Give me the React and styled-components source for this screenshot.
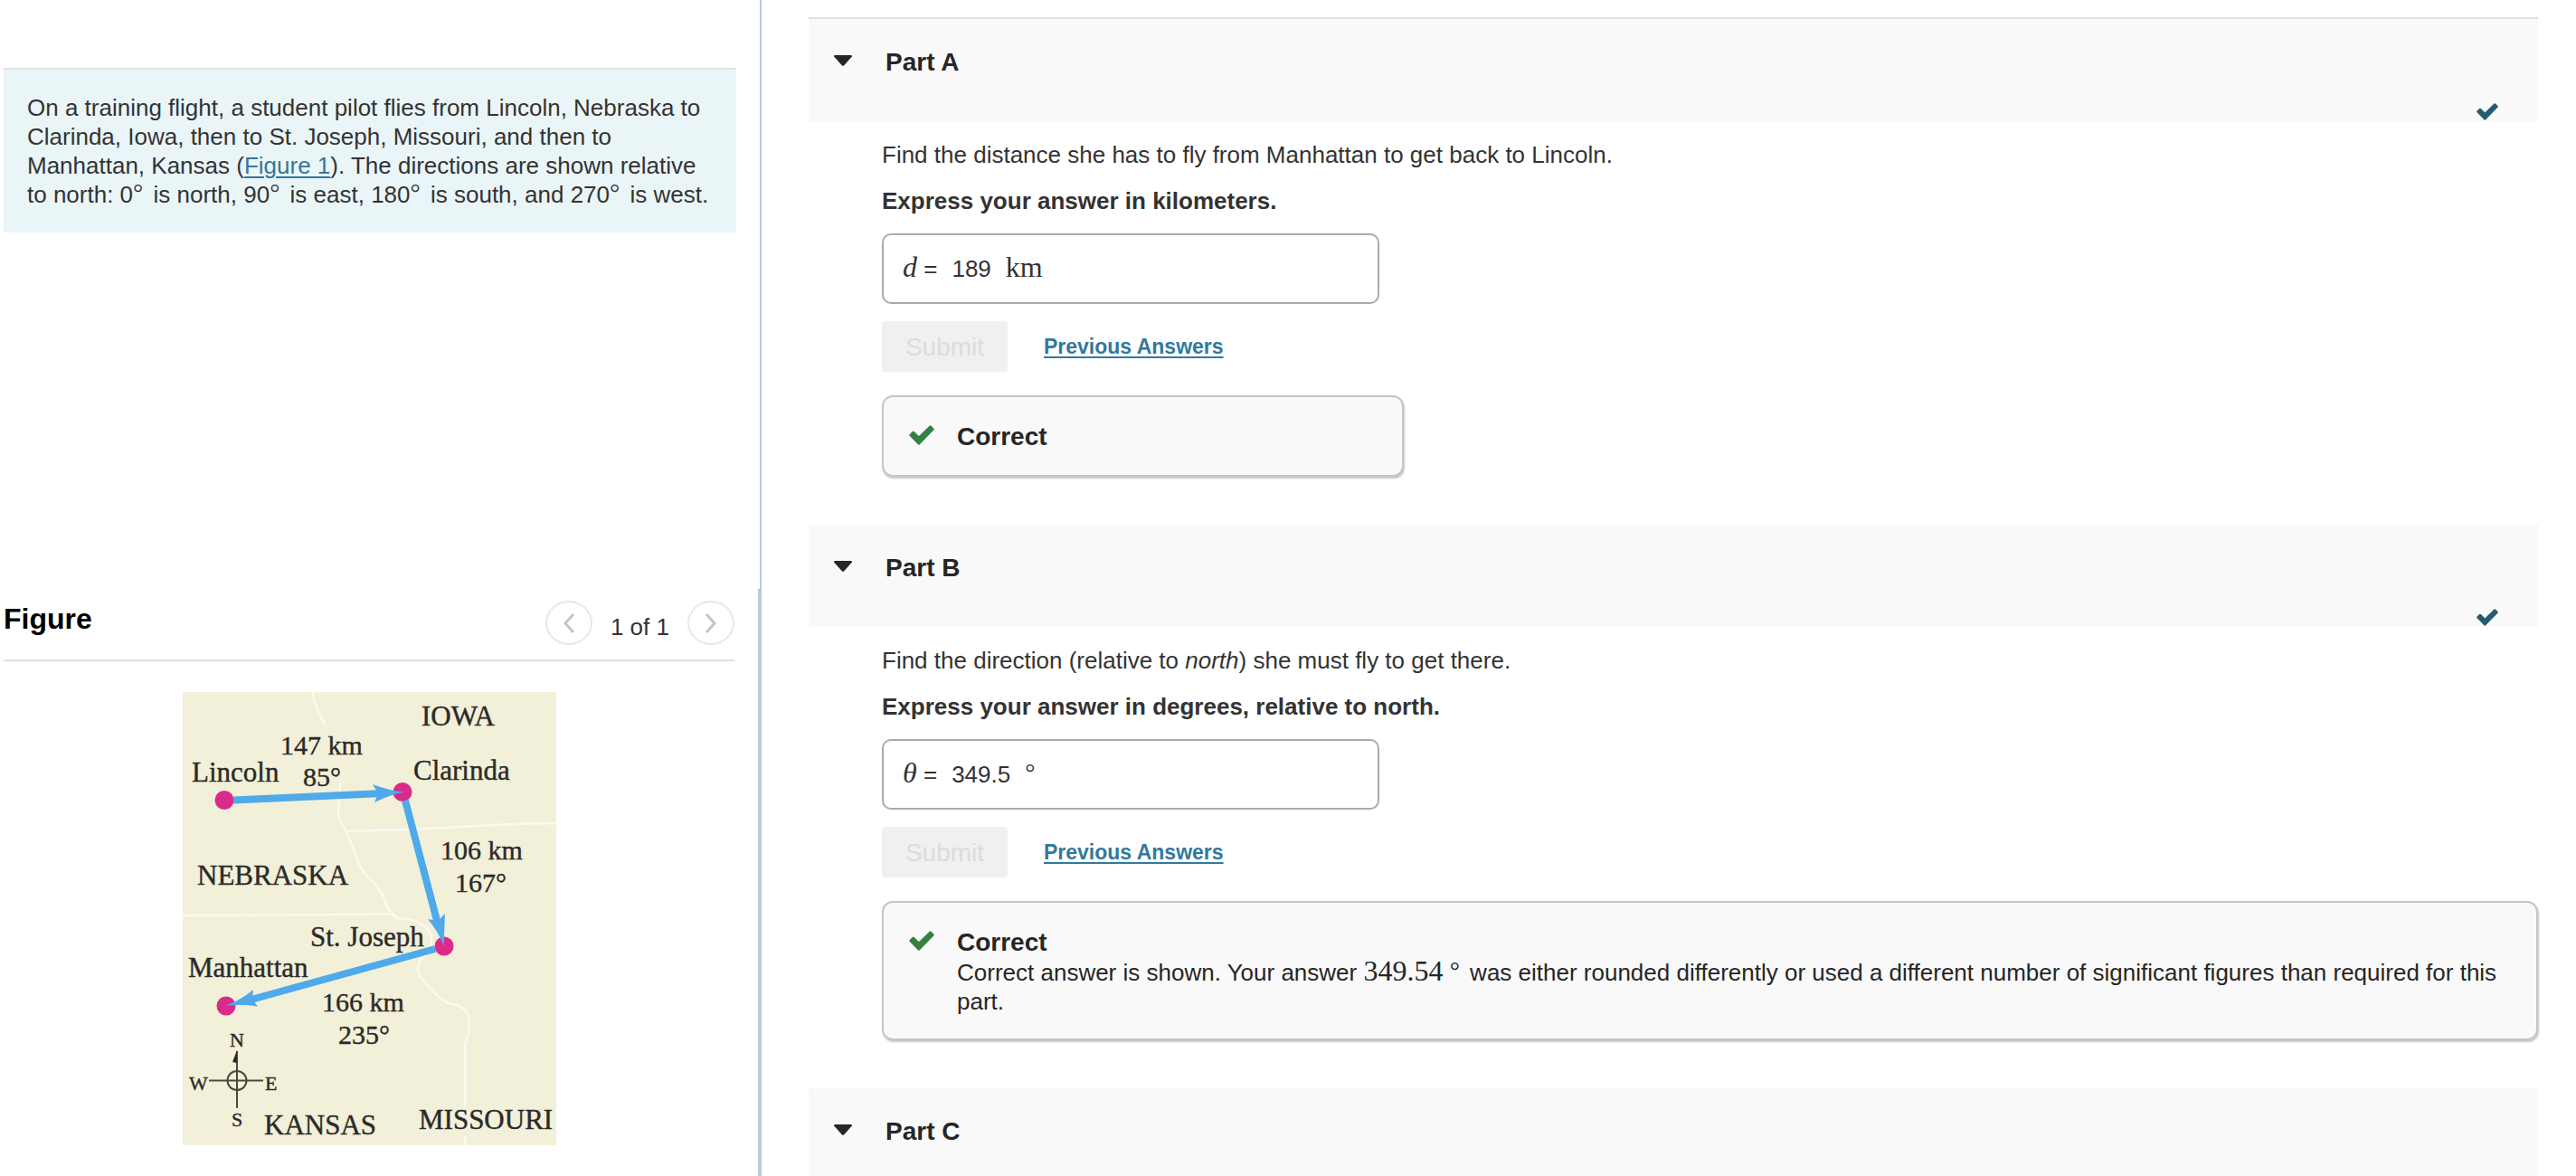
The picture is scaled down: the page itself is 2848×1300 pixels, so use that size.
import React from 'react';
import styled, { createGlobalStyle } from 'styled-components';

const GlobalStyle = createGlobalStyle`
  * {
    box-sizing: border-box;
  }

  body {
    margin: 0;
    background: #ffffff;
    color: #333333;
    font-family: "Liberation Sans", Arial, sans-serif;
    font-size: 26px;
    line-height: 32px;
  }
`;

const Page = styled.div`
  display: flex;
  min-height: 100vh;
`;

const Sidebar = styled.aside`
  display: flex;
  flex-direction: column;
  flex: none;
  width: 842px;
`;

const PromptPane = styled.section`
  min-height: 651px;
  padding: 75px 26px 0 4px;
  border-right: 2px solid #bccadc;
`;

const Prompt = styled.p`
  margin: 0;
  padding: 26px 24px 26px 26px;
  border-top: 2px solid #dfe0e0;
  background: #eaf5f8;
`;

const TextLink = styled.a`
  color: #33789c;
  text-decoration: underline;
  text-decoration-thickness: 2px;
  text-underline-offset: 3px;
`;

const Degree = styled.span`
  margin-right: 4px;
  font-family: "Liberation Serif", serif;
  font-size: 28px;
  line-height: 0;
  vertical-align: 2px;
`;

const FigurePane = styled.section`
  flex: 1;
  padding: 13px 26px 0 4px;
  border-right: 4px solid #bccadc;
`;

const FigureHeader = styled.header`
  display: flex;
  align-items: flex-start;
  justify-content: space-between;
  height: 67px;
  border-bottom: 2px solid #dfe0e0;

  h2 {
    margin: 4px 0 0;
    color: #000000;
    font-size: 32px;
    line-height: 32px;
  }
`;

const Pager = styled.nav`
  display: flex;
  align-items: center;
  gap: 20px;

  span {
    padding-top: 8px;
  }
`;

const PagerButton = styled.button`
  display: grid;
  place-items: center;
  width: 52px;
  height: 49px;
  padding: 0;
  border: 2px solid #e8e8e8;
  border-radius: 50%;
  background: #ffffff;
  color: #c4c4c4;
`;

const MapDrawing = styled.svg`
  display: block;
  width: 413px;
  height: 501px;
  margin: 34px auto 0 198px;
  background: #f2f0d8;

  text {
    fill: #2b2a2a;
    stroke: #2b2a2a;
    stroke-width: 0.4;
    font-family: "Liberation Serif", "Times New Roman", serif;
    font-size: 31px;
  }

  .measure {
    font-size: 30px;
  }

  .compass {
    font-size: 22px;
  }
`;

const Main = styled.main`
  flex: 1;
  min-width: 0;
  padding: 19px 42px 0 52px;
`;

const PartHeader = styled.header`
  display: flex;
  justify-content: space-between;
  align-items: flex-end;
  padding: 0 44px 1px 0;
  border-top: ${({ $ruled }) => ($ruled ? '2px solid #dfe0e0' : 'none')};
  background: #f9f9f9;

  h2 {
    margin: 0;
    font-size: 28px;
  }
`;

const PartToggle = styled.button`
  display: flex;
  align-items: center;
  gap: 37px;
  padding: 32px 28px 48px;
  border: none;
  background: none;
  color: #262626;
  font: inherit;
  font-weight: bold;
  line-height: 32px;
  cursor: pointer;

  svg {
    margin-bottom: 4px;
  }
`;

const PartBody = styled.div`
  padding: 21px 0 53px 81px;
`;

const Question = styled.p`
  margin: 0 0 19px;
`;

const Instruction = styled.p`
  margin: 0 0 20px;
  font-weight: bold;
`;

const AnswerBox = styled.div`
  display: flex;
  align-items: baseline;
  width: 550px;
  height: 78px;
  padding: 21px 21px;
  border: 2px solid #aaaaaa;
  border-radius: 10px;

  label {
    margin-right: 16px;
  }
`;

const MathText = styled.span`
  font-family: "Liberation Serif", "Times New Roman", serif;
  font-size: 32px;
  font-style: ${({ $italic }) => ($italic ? 'italic' : 'normal')};
  line-height: 0;
`;

const AnswerInput = styled.input`
  field-sizing: content;
  margin-right: 16px;
  padding: 0;
  border: none;
  outline: none;
  background: none;
  color: inherit;
  font: inherit;
`;

const Actions = styled.div`
  display: flex;
  align-items: center;
  gap: 40px;
  margin: 19px 0 26px;
`;

const SubmitButton = styled.button`
  width: 139px;
  height: 56px;
  padding: 2px 0 0;
  border: none;
  border-radius: 4px;
  background: #f0f0f0;
  color: #dcdcdc;
  font: inherit;
  font-size: 28px;
`;

const PreviousLink = styled(TextLink)`
  font-size: 23px;
  font-weight: bold;
`;

const Feedback = styled.div`
  display: flex;
  gap: 25px;
  width: ${({ $wide }) => ($wide ? 'auto' : '577px')};
  padding: 28px 28px 25px;
  border: 2px solid #c6c6c6;
  border-radius: 12px;
  background: #f9f9f9;
  box-shadow: 1px 2px 2px #c6c6c6;
  color: #262626;

  svg {
    flex: none;
    margin-top: 3px;
  }

  h3 {
    margin: 0 0 1px;
    font-size: 28px;
  }

  p {
    margin: 0;
  }
`;

function Check({ color, width, height }) {
  return (
    <svg width={width} height={height} viewBox="0 0 24 19" aria-hidden="true">
      <path
        d="M1.500 9.500L4 7L9.300 12.200L20.300 1.500L22.500 3.800L9.300 17.500Z"
        fill={color}
        stroke={color}
        strokeWidth="2.500"
        strokeLinejoin="round"
      />
    </svg>
  );
}

function Chevron({ d }) {
  return (
    <svg width="14" height="24" viewBox="0 0 14 24" fill="none" stroke="currentColor" strokeWidth="3" aria-hidden="true">
      <path d={d} />
    </svg>
  );
}

const places = [
  ['IOWA', 264, 37],
  ['Lincoln', 10, 99],
  ['Clarinda', 255, 97],
  ['NEBRASKA', 16, 213],
  ['St. Joseph', 141, 281],
  ['Manhattan', 6, 315],
  ['KANSAS', 90, 489],
  ['MISSOURI', 261, 483],
];

const measures = [
  ['147 km', 108, 69],
  ['85°', 133, 104],
  ['106 km', 285, 185],
  ['167°', 301, 221],
  ['166 km', 154, 353],
  ['235°', 172, 389],
];

const directions = [
  ['N', 52, 392],
  ['W', 7, 440],
  ['E', 91, 440],
  ['S', 54, 480],
];

const cities = [
  [46, 119.5],
  [243, 110.5],
  [289, 281],
  [48, 347],
];

function FlightMap() {
  return (
    <MapDrawing viewBox="0 0 413 501" role="img" aria-label="Map of the training flight">
      {/* state borders */}
      <g fill="none" stroke="#fafaf0" strokeWidth="2.5">
        <path d="M144 0Q144 12 157 36" />
        <path d="M174 101L172 132Q172 141 181 154L196 192Q200 201 209 209Q220 219 223 230Q227 242 237 250C256 250 275 258 275 275Q275 286 267 292Q257 302 261 311Q267 322 282 336Q290 344 299 345C314 348 320 359 316 377Q312 388 312 396V458" />
        <path d="M312 491V501M181 154L270 151L365 146L413 145M0 247L232 245.5" />
      </g>
      {cities.map(([x, y]) => (
        <circle key={x} cx={x} cy={y} r="10.5" fill="#d92b8a" />
      ))}
      <g stroke="#4eaaea" strokeWidth="8">
        <path d="M56 119.5L222 112M246 120L283 260M279 284L72 341" />
      </g>
      <g fill="#4eaaea">
        <path d="M245 110.5Q228 109 210 102L216 112L212 122Q228 114 245 110.5Z" />
        <path d="M289 281Q289 263 290 245L282 253L271 251Q282 264 289 281Z" />
        <path d="M46 347Q64 341 78 329L77 340L83 347.5Q64 345 46 347Z" />
      </g>
      <g fill="none" stroke="#4a493f" strokeWidth="2">
        <circle cx="60" cy="429.5" r="10.5" />
        <path d="M60 397V460M29 429.5H89" />
      </g>
      <path d="M60 396L55 409L60 410Z" fill="#2b2a2a" />
      {places.map(([name, x, y]) => (
        <text key={name} x={x} y={y}>{name}</text>
      ))}
      {measures.map(([name, x, y]) => (
        <text key={name} className="measure" x={x} y={y}>{name}</text>
      ))}
      {directions.map(([name, x, y]) => (
        <text key={name} className="compass" x={x} y={y}>{name}</text>
      ))}
    </MapDrawing>
  );
}

function Part({ title, ruled, done, children }) {
  const [isOpen, setIsOpen] = React.useState(true);

  return (
    <section>
      <PartHeader $ruled={ruled}>
        <h2>
          <PartToggle aria-expanded={isOpen} onClick={() => setIsOpen((open) => !open)}>
            <svg width="20" height="12" viewBox="0 0 20 12" aria-hidden="true">
              <path d="M1 0H19Q21 1 19 2.500L11 11.500Q10 12 9 11.500L1 2.500Q-1 1 1 0Z" fill="#262626" />
            </svg>
            {title}
          </PartToggle>
        </h2>
        {done && <Check color="#265c70" width={24} height={19} />}
      </PartHeader>
      {isOpen && children && <PartBody>{children}</PartBody>}
    </section>
  );
}

function Answer({ id, symbol, value, unit }) {
  return (
    <>
      <AnswerBox>
        <label htmlFor={id}>
          <MathText $italic>{symbol}</MathText> =
        </label>
        <AnswerInput id={id} defaultValue={value} readOnly />
        {unit}
      </AnswerBox>
      <Actions>
        <SubmitButton disabled>Submit</SubmitButton>
        <PreviousLink href="#previous">Previous Answers</PreviousLink>
      </Actions>
    </>
  );
}

export default function App() {
  return (
    <>
      <GlobalStyle />
      <Page>
        <Sidebar>
          <PromptPane>
            <Prompt>
              On a training flight, a student pilot flies from Lincoln, Nebraska to Clarinda, Iowa,
              then to St. Joseph, Missouri, and then to Manhattan, Kansas (
              <TextLink href="#figure">Figure 1</TextLink>). The directions are shown relative to
              north: 0<Degree>°</Degree> is north, 90<Degree>°</Degree> is east,
              180<Degree>°</Degree> is south, and 270<Degree>°</Degree> is west.
            </Prompt>
          </PromptPane>
          <FigurePane id="figure">
            <FigureHeader>
              <h2>Figure</h2>
              <Pager aria-label="Figures">
                <PagerButton disabled aria-label="Previous figure">
                  <Chevron d="M12 2L3 12L12 22" />
                </PagerButton>
                <span>1 of 1</span>
                <PagerButton disabled aria-label="Next figure">
                  <Chevron d="M2 2L11 12L2 22" />
                </PagerButton>
              </Pager>
            </FigureHeader>
            <FlightMap />
          </FigurePane>
        </Sidebar>

        <Main>
          <Part title="Part A" ruled done>
            <Question>Find the distance she has to fly from Manhattan to get back to Lincoln.</Question>
            <Instruction>Express your answer in kilometers.</Instruction>
            <Answer id="distance" symbol="d" value="189" unit={<MathText>km</MathText>} />
            <Feedback>
              <Check color="#368042" width={28} height={22} />
              <h3>Correct</h3>
            </Feedback>
          </Part>

          <Part title="Part B" done>
            <Question>
              Find the direction (relative to <em>north</em>) she must fly to get there.
            </Question>
            <Instruction>Express your answer in degrees, relative to north.</Instruction>
            <Answer
              id="direction"
              symbol="θ"
              value="349.5"
              unit={<span><Degree>°</Degree></span>}
            />
            <Feedback $wide>
              <Check color="#368042" width={28} height={22} />
              <div>
                <h3>Correct</h3>
                <p>
                  Correct answer is shown. Your answer <MathText>349.54</MathText>{' '}
                  <Degree>°</Degree> was either rounded differently or used a different number of
                  significant figures than required for this part.
                </p>
              </div>
            </Feedback>
          </Part>

          <Part title="Part C" />
        </Main>
      </Page>
    </>
  );
}
